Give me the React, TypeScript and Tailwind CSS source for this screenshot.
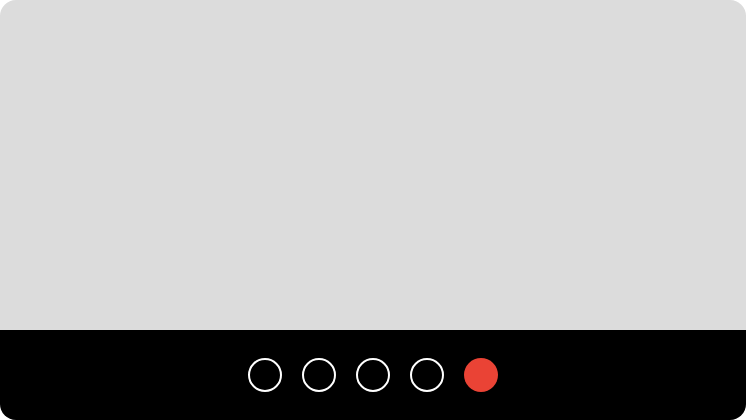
const steps = [0, 1, 2, 3, 4];

export default function App() {
  const active = 4;

  return (
    <div className="h-[420px] w-[746px] bg-white">
      <div className="flex h-full w-full flex-col overflow-hidden rounded-2xl">
        <div className="flex-1 bg-[#dcdcdc]" />
        <div className="flex h-[90px] items-center justify-center gap-5 bg-black">
          {steps.map((i) =>
            i === active ? (
              <span key={i} className="h-[34px] w-[34px] rounded-full bg-[#ea4335]" />
            ) : (
              <span key={i} className="h-[34px] w-[34px] rounded-full border-2 border-white" />
            )
          )}
        </div>
      </div>
    </div>
  );
}
